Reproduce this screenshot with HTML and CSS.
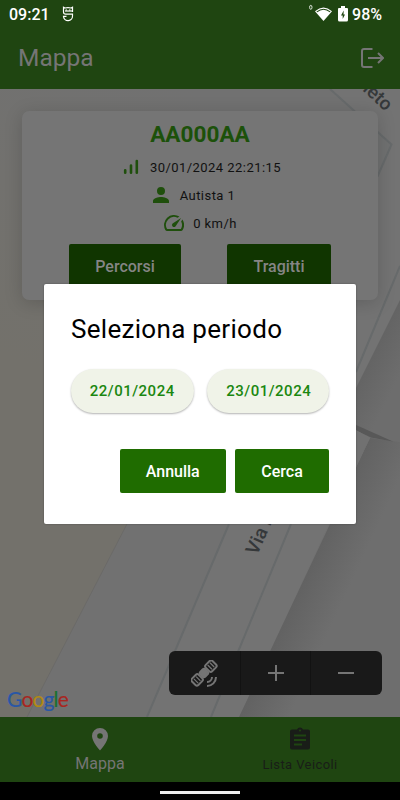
FILE: index.html
```html
<!DOCTYPE html>
<html lang="it">
<head>
<meta charset="utf-8">
<title>Mappa</title>
<link rel="stylesheet" href="styles.css">
</head>
<body>
<div class="phone">
  <header class="top">
    <div class="status">
      <span class="clock">09:21</span>
      <svg class="cat" width="12" height="16" viewBox="0 0 12 16" fill="none" stroke="#fff" stroke-width="1.200"><path d="M10.500 6V1.200L9 2Q6 1.200 3 2l-1.500-.8V6q0 2.200 2.200 2.200h6.800v1.600a4.500 4.500 0 0 1-9 .6h3"/><path d="M3 5h7.500" /><path d="M3.700 4h1M7.300 4h1" stroke-width="1.500"/></svg>
      <span class="status-right">
        <svg width="24" height="18" viewBox="0 0 24 18"><ellipse cx="2.800" cy="3.300" rx="1.200" ry="2" fill="none" stroke="#dce3da"/><path d="M7 7.200Q15.500-.2 24 7.200L15.500 17z" fill="#fff"/><path d="M8.800 7.900Q15.500 2.500 22.200 7.900" fill="none" stroke="#1f4511" stroke-width="1.100"/></svg>
        <svg class="battery" width="10" height="16" viewBox="0 0 10 16"><path d="M3 0h4v2h2a1 1 0 0 1 1 1v11a1.500 1.500 0 0 1-1.500 1.500h-7A1.500 1.500 0 0 1 0 14V3a1 1 0 0 1 1-1h2z" fill="#fff"/><path d="M5.700 4.500L3 9.500h1.700V13L7 8.500H5.500z" fill="#1f4511"/></svg>
        <span class="percent">98%</span>
      </span>
    </div>
    <div class="bar">
      <h1 class="title">Mappa</h1>
      <svg width="24" height="22" viewBox="0 0 24 22" fill="none" stroke="#757575" stroke-width="2"><path d="M12.500 2H4Q2 2 2 4v14q0 2 2 2h8.500M8 11h14.500M18 6l5 5-5 5"/></svg>
    </div>
  </header>
  <main class="map">
    <svg class="terrain" width="400" height="628" viewBox="0 89 400 628">
      <defs>
        <linearGradient id="land" gradientUnits="userSpaceOnUse" x1="60" y1="380" x2="190" y2="89"><stop offset="0" stop-color="#73716b"/><stop offset="1" stop-color="#717171"/></linearGradient>
        <linearGradient id="shade" gradientUnits="userSpaceOnUse" x1="329" y1="524" x2="370" y2="543"><stop offset="0" stop-color="#626262"/><stop offset="1" stop-color="#6e6e6e"/></linearGradient>
        <linearGradient id="shade-top" gradientUnits="userSpaceOnUse" x1="378" y1="344" x2="408" y2="359"><stop offset="0" stop-color="#646464"/><stop offset="1" stop-color="#6d6d6d"/></linearGradient>
      </defs>
      <path d="M0 89h400v628H0z" fill="#717171"/>
      <path d="M0 89h330L127 524 27 717H0z" fill="url(#land)"/>
      <path d="M127 524L27 717" stroke="#6b6a68" fill="none"/>
      <path d="M229 524l-82 193h93l89-193 71-224V89h-70l61 55z" fill="#737373"/>
      <path d="M330 524h-1l41-86 20-30h10v309H239z" fill="url(#shade)"/>
      <path d="M400 300l-44 88v37l14 13 30 4z" fill="url(#shade-top)"/>
      <path d="M356 425l37 16.500-22-4-15-7z" fill="#585858"/>
      <path d="M356 430l14 8-41 86h-20z" fill="#717171"/>
      <path d="M330 89l61.500 55.500-14 32V131z" fill="#707171"/>
      <path d="M330 89l61.500 55.500-14 32M400 266l-44 106M229 524l-82 193M291 524l-80 193" stroke="#676a6b" stroke-width="2" fill="none"/>
      <g class="street"><text transform="translate(362 90) rotate(43)" font-size="19">leto</text><text transform="translate(257 556) rotate(-66)" font-size="19">Via Roma</text></g>
    </svg>
    <section class="card">
      <h2 class="plate">AA000AA</h2>
      <div class="row time"><svg width="16" height="16" viewBox="0 0 16 16" stroke="#1f4f0c" stroke-width="2.600" stroke-linecap="round"><path d="M2.200 11.200v2.500M8 6.500v7.200M13.800 2v11.700"/></svg><span>30/01/2024 22:21:15</span></div>
      <div class="row driver"><svg width="16" height="16" viewBox="4 4 16 16" fill="#1f4f0c"><path d="M12 12a4 4 0 1 0 0-8 4 4 0 0 0 0 8zm0 2c-2.700 0-8 1.300-8 4v2h16v-2c0-2.700-5.300-4-8-4z"/></svg><span>Autista 1</span></div>
      <div class="row speed"><svg width="20" height="16" viewBox="2 4 20 16" fill="#1f4f0c"><path d="M20.380 8.570l-1.230 1.850a8 8 0 0 1-.22 7.580H5.070A8 8 0 0 1 15.580 6.850l1.850-1.230A10 10 0 0 0 3.350 19a2 2 0 0 0 1.720 1h13.850a2 2 0 0 0 1.740-1 10 10 0 0 0-.27-10.440z"/><path d="M10.590 15.410a2 2 0 0 0 2.830 0l5.660-8.490-8.490 5.660a2 2 0 0 0 0 2.830z"/></svg><span>0 km/h</span></div>
      <div class="card-actions"><button class="dim first">Percorsi</button><button class="dim">Tragitti</button></div>
    </section>
    <div class="google" aria-label="Google"><span class="b">G</span><span class="r">o</span><span class="y">o</span><span class="b">g</span><span class="g">l</span><span class="r">e</span></div>
    <div class="controls">
      <div class="control"><svg width="28" height="28" viewBox="0 0 28 28"><g transform="rotate(-45 13 13)" fill="none" stroke="#757575" stroke-width="2"><rect x="-1.500" y="8.500" width="9.500" height="9" rx="2"/><path d="M1.700 10v6M4.900 10v6" stroke-width="1.300"/><rect x="18" y="8.500" width="9.500" height="9" rx="2"/><path d="M21.200 10v6M24.400 10v6" stroke-width="1.300"/><rect x="9.500" y="9.500" width="7" height="7" rx="2" fill="#757575"/></g><path d="M21 17a5 5 0 0 1-5 5M25 17a9 9 0 0 1-9 9" fill="none" stroke="#757575" stroke-width="2"/></svg></div>
      <div class="control"><svg width="18" height="18" viewBox="0 0 18 18" stroke="#757575" stroke-width="2"><path d="M1 9h16M9 1v16"/></svg></div>
      <div class="control"><svg width="18" height="18" viewBox="0 0 18 18" stroke="#757575" stroke-width="2"><path d="M1 9h16"/></svg></div>
    </div>
  </main>
  <nav class="tabs">
    <div class="tab active"><svg width="24" height="24" viewBox="0 0 24 24" fill="#757575"><path fill-rule="evenodd" d="M12 1a8 8 0 0 0-8 8c0 5.800 8 14.500 8 14.500S20 14.800 20 9a8 8 0 0 0-8-8zm0 10.800A2.800 2.800 0 1 1 12 6.200a2.800 2.800 0 0 1 0 5.600z"/></svg><span>Mappa</span></div>
    <div class="tab"><svg width="24" height="24" viewBox="0 0 24 24" fill="#191d18"><path fill-rule="evenodd" d="M20 2.500h-5a3.200 3.200 0 0 0-6 0H4a2 2 0 0 0-2 2v16a2 2 0 0 0 2 2h16a2 2 0 0 0 2-2v-16a2 2 0 0 0-2-2zm-8 0a1 1 0 1 1 0 2 1 1 0 0 1 0-2zM14 18.500H6v-2h8zm4-4.500H6v-2h12zm0-4.500H6v-2h12z"/></svg><span>Lista Veicoli</span></div>
  </nav>
  <footer class="system"><span class="handle"></span></footer>
  <section class="dialog">
    <h2 class="dialog-title">Seleziona periodo</h2>
    <div class="dates"><button class="date">22/01/2024</button><button class="date to">23/01/2024</button></div>
    <div class="actions"><button class="action cancel">Annulla</button><button class="action">Cerca</button></div>
  </section>
</div>
</body>
</html>
```
FILE: styles.css
```css
* { box-sizing: border-box; }
body { margin: 0; font-family: Roboto, "Liberation Sans", sans-serif; }
h1, h2 { margin: 0; font-weight: 400; }
button { border: 0; padding: 0; font: inherit; }
svg { display: block; flex: none; }
.phone { position: relative; width: 400px; height: 800px; display: flex; flex-direction: column; overflow: hidden; }
.top { height: 89px; background: #1f4511; }
.status { height: 28px; display: flex; align-items: center; padding: 0 18px 0 9px; color: #fff; font-size: 16px; font-weight: 500; }
.clock { width: 40px; }
.cat { margin-left: 13px; margin-top: -1px; }
.status-right { display: flex; align-items: center; margin-left: auto; }
.status-right svg { margin-top: -2px; }
.status-right .battery { margin: -1px 4px 0 6px; }
.bar { height: 60px; display: flex; align-items: center; justify-content: space-between; padding: 0 16px 1px 18px; }
.title { color: #757575; font-size: 24.5px; }
.map { height: 628px; position: relative; display: flex; flex-direction: column; }
.terrain { position: absolute; inset: 0; }
.street { font-family: Roboto, sans-serif; fill: #35383a; font-weight: 500; }
.card { position: relative; height: 189px; margin: 22px 22px 0; padding-top: 8px; border-radius: 7px; background: #757575; box-shadow: 0 3px 18px rgba(0,0,0,.17); display: flex; flex-direction: column; }
.plate { height: 31px; line-height: 31px; text-align: center; color: #1c510a; font-size: 22.6px; font-weight: 700; }
.row { height: 28px; margin-top: 3px; display: flex; align-items: center; justify-content: center; gap: 11px; font-size: 13px; letter-spacing: .45px; color: #111; }
.row + .row { margin-top: 0; }
.time { padding-left: 4px; }
.driver { padding-right: 12px; }
.speed { padding-left: 1px; gap: 9px; }
.card-actions { display: flex; gap: 46px; margin: 7px 0 0 47px; }
.dim { width: 104px; height: 44px; border-radius: 2px; background: #103500; color: #858585; font-size: 16px; font-weight: 500; }
.first { width: 112px; }
.google { position: relative; margin: auto 0 6px 7px; font-family: Lato, sans-serif; font-size: 21px; line-height: 24px; letter-spacing: -.85px; -webkit-text-stroke: .15px currentColor; }
.b { color: #2957a5; } .r { color: #a82621; } .y { color: #b18a13; } .g { color: #17702f; }
.controls { position: absolute; right: 18px; bottom: 22px; width: 213px; height: 44px; border-radius: 6px; background: #191919; display: flex; }
.control { width: 71px; display: flex; align-items: center; justify-content: center; }
.control + .control { width: 70px; border-left: 1px solid #121212; }
.control:first-child { padding-top: 2px; }
.tabs { height: 65px; background: #1f4511; display: flex; }
.tab { flex: 1; display: flex; flex-direction: column; align-items: center; padding-top: 10px; gap: 4px; color: #191d18; font-size: 13px; letter-spacing: .4px; line-height: 20px; }
.tab.active { color: #757575; font-size: 16px; letter-spacing: 0; }
.tab.active span { margin-top: -1px; }
.system { height: 18px; background: #000; display: flex; justify-content: center; padding-top: 9px; }
.handle { width: 80px; height: 3px; background: #eee; }
.dialog { position: absolute; left: 44px; top: 284px; width: 312px; height: 240px; padding: 27px 27px 26px; background: #fff; border-radius: 2px; box-shadow: 0 0 2px rgba(0,0,0,.35); }
.dialog-title { font-size: 26px; line-height: 36px; letter-spacing: .3px; color: #000; }
.dates { display: flex; gap: 13px; margin-top: 22px; }
.date { width: 122.5px; height: 44px; border-radius: 22px; background: #f0f3e8; color: #1b8710; font-size: 15px; font-weight: 500; letter-spacing: .5px; box-shadow: 0 1px 2px rgba(0,0,0,.3); }
.to { padding-left: 2px; }
.actions { display: flex; justify-content: flex-end; gap: 9px; margin-top: 36px; }
.action { width: 94px; height: 44px; border-radius: 2px; background: #1f6c00; color: #fff; font-size: 16px; font-weight: 500; }
.cancel { width: 106.5px; }
```
